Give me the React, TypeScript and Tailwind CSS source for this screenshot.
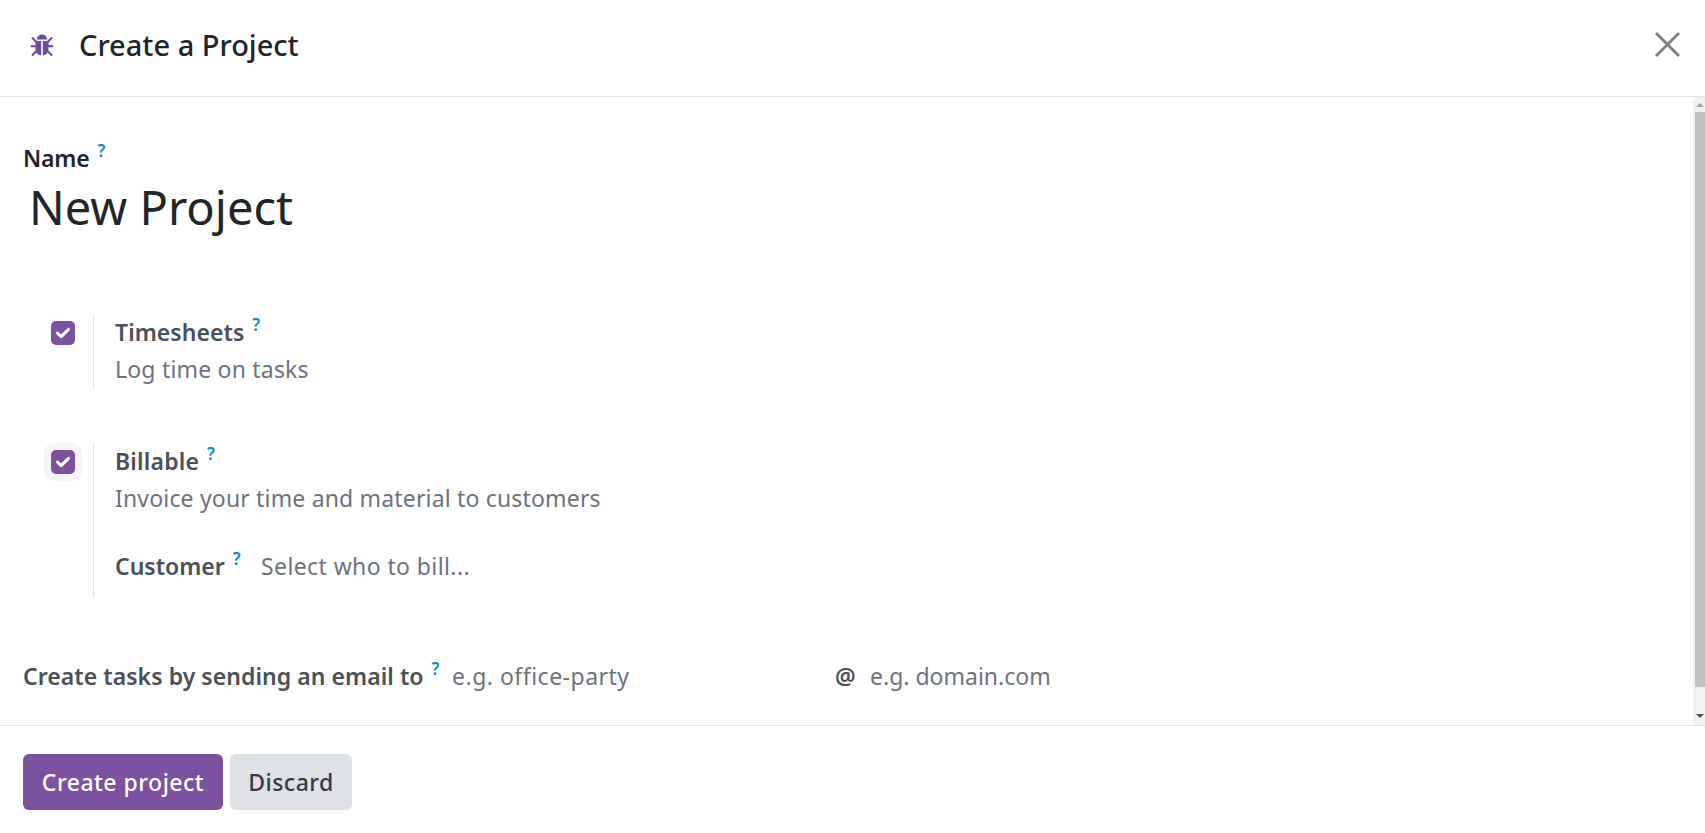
import React from "react";

const Q = () => (
  <span className="text-[17px] font-semibold leading-none text-[#0b8db5] ml-[8px] relative -top-[10px] tracking-normal">?</span>
);

const Check = ({ halo = false }: { halo?: boolean }) => (
  <div className={`w-[38px] h-[38px] rounded-[10px] flex items-center justify-center ${halo ? "bg-[#f6f3f9]" : ""}`}>
    <div className="w-[24px] h-[24px] rounded-[5px] bg-[#7c519f] flex items-center justify-center">
      <svg width="16" height="14" viewBox="0 0 16 14" fill="none">
        <path d="M2.5 7.2 L6.2 10.6 L13.5 3.4" stroke="#fff" strokeWidth="3" strokeLinecap="round" strokeLinejoin="round" />
      </svg>
    </div>
  </div>
);

export default function App() {
  return (
    <div className="w-[1705px] h-[833px] bg-white flex flex-col overflow-hidden font-['Noto_Sans',sans-serif] text-[#212529]">
      <header className="h-[97px] shrink-0 border-b border-[#dee2e6] flex items-center pb-[7px] pl-[30px] pr-[25px]">
        <svg width="24" height="24" viewBox="0 0 24 24" className="shrink-0">
          <g fill="#714b9b">
            <path d="M6.8 6.6 C7.2 3.2 9.6 1.5 12 1.5 C14.4 1.5 16.8 3.2 17.2 6.6 Z" />
            <path d="M5.5 8 H11.2 V22.5 C8 22.2 5.5 19.6 5.5 15.8 Z" />
            <path d="M12.8 8 H18.5 V15.8 C18.5 19.6 16 22.2 12.8 22.5 Z" />
          </g>
          <g stroke="#714b9b" strokeWidth="2.1" fill="none" strokeLinecap="butt">
            <path d="M2 4.6 L6.4 9" />
            <path d="M22 4.6 L17.6 9" />
            <path d="M0.8 13.2 H6" />
            <path d="M23.2 13.2 H18" />
            <path d="M2 22.6 L6.8 17.8" />
            <path d="M22 22.6 L17.2 17.8" />
          </g>
        </svg>
        <h1 className="ml-[25px] text-[29px] font-medium leading-none">Create a Project</h1>
        <button className="ml-auto w-[25px] h-[25px] flex items-center justify-center" aria-label="Close">
          <svg width="25" height="25" viewBox="0 0 25 25" fill="none">
            <path d="M1 1 L24 24 M24 1 L1 24" stroke="#7d7d7d" strokeWidth="2.8" />
          </svg>
        </button>
      </header>

      <div className="h-[628px] shrink-0 flex">
        <main className="flex-1 min-w-0 pl-[23px] pt-[48px]">
          <div className="text-[23px] font-semibold leading-[26px] tracking-[-0.2px]">Name<Q /></div>
          <div className="ml-[6px] mt-[4px] text-[47px] leading-[64px]">New Project</div>

          <section className="mt-[76px] ml-[21px] flex items-start">
            <div className="w-[49px] -mt-[1px]"><Check /></div>
            <div className="h-[73px] border-l border-[#dee2e6] pl-[21px] pt-[1px]">
              <div className="text-[23px] font-semibold text-[#495057] leading-[32px] tracking-[0.06px]">Timesheets<Q /></div>
              <div className="text-[23px] text-[#6b7280] leading-[32px] mt-[5px] tracking-[0.2px]">Log time on tasks</div>
            </div>
          </section>

          <section className="mt-[55px] ml-[21px] flex items-start">
            <div className="w-[49px]"><Check halo /></div>
            <div className="h-[155px] border-l border-[#dee2e6] pl-[21px] pt-[2px]">
              <div className="text-[23px] font-semibold text-[#495057] leading-[32px] tracking-[0.2px]">Billable<Q /></div>
              <div className="text-[23px] text-[#6b7280] leading-[32px] mt-[5px] tracking-[0.17px]">Invoice your time and material to customers</div>
              <div className="mt-[36px] flex items-baseline text-[23px] leading-[32px]">
                <span className="w-[146px] shrink-0 font-semibold text-[#495057]">Customer<Q /></span>
                <span className="text-[#6b7280] tracking-[0.4px]">Select who to bill...</span>
              </div>
            </div>
          </section>

          <div className="mt-[62px] flex items-baseline text-[23px] leading-[32px]">
            <span className="w-[429px] shrink-0 font-semibold text-[#495057] tracking-[0.06px]">Create tasks by sending an email to<Q /></span>
            <span className="w-[383px] shrink-0 text-[#6b7280] tracking-[0.5px]">e.g. office-party</span>
            <span className="w-[35px] shrink-0 font-semibold text-[#495057]">@</span>
            <span className="text-[#6b7280]">e.g. domain.com</span>
          </div>
        </main>
        <div className="w-[12px] shrink-0 bg-[#f1f1f1] flex flex-col items-end">
          <div className="w-[10px] h-[15px] flex items-center justify-center">
            <div className="w-0 h-0 border-x-[4px] border-x-transparent border-b-[4px] border-b-[#a3a3a3]" />
          </div>
          <div className="w-[10px] h-[575px] bg-[#c1c1c1]" />
          <div className="flex-1" />
          <div className="w-[10px] h-[15px] mb-[2px] flex items-center justify-center">
            <div className="w-0 h-0 border-x-[4px] border-x-transparent border-t-[4px] border-t-[#505050]" />
          </div>
        </div>
      </div>

      <footer className="flex-1 border-t border-[#dee2e6] pl-[23px] pt-[28px] flex items-start gap-[7px]">
        <button className="h-[56px] w-[200px] rounded-[6px] bg-[#7c519f] text-white text-[23px] font-medium tracking-[0.5px]">Create project</button>
        <button className="h-[56px] w-[122px] rounded-[6px] bg-[#dee1e6] text-[#343a40] text-[23px] font-medium tracking-[0.5px]">Discard</button>
      </footer>
    </div>
  );
}
